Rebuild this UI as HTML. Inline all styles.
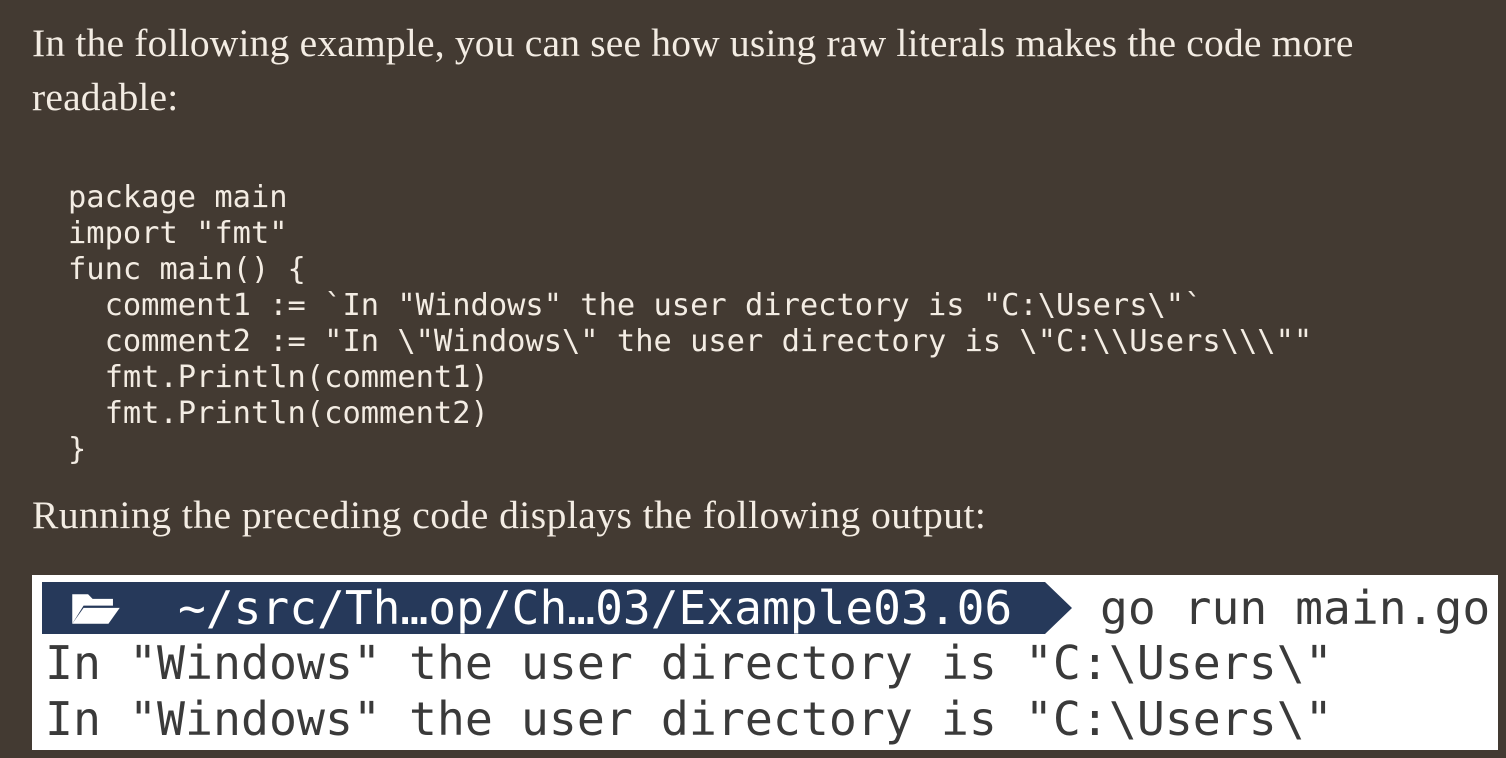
<!DOCTYPE html>
<html><head><style>
body{margin:0;width:1506px;height:758px;background:#433a32;overflow:hidden;position:relative;font-family:"Liberation Serif",serif;color:#f3ece3}
.p{position:absolute;left:32px;font-size:39.5px;letter-spacing:0.19px;line-height:54px;white-space:nowrap}
.code{position:absolute;left:68px;top:180px;font-family:"DejaVu Sans Mono",monospace;font-size:30.4px;line-height:36px;white-space:pre;color:#f3ece3}
.term{position:absolute;left:32px;top:575px;width:1466px;height:175px;background:#fff}
.bar{position:absolute;left:10px;top:7px;width:1003px;height:52px;background:#26395a}
.arrow{position:absolute;left:1013px;top:7px;width:0;height:0;border-top:26px solid transparent;border-bottom:26px solid transparent;border-left:27px solid #26395a}
.t{position:absolute;font-family:"DejaVu Sans Mono",monospace;font-size:46.5px;white-space:pre;color:#3a3a3a;line-height:56px}
</style></head><body>
<div class="p" style="top:16px">In the following example, you can see how using raw literals makes the code more</div>
<div class="p" style="top:70px">readable:</div>
<div class="code">package main
import "fmt"
func main() {
  comment1 := `In "Windows" the user directory is "C:\Users\"`
  comment2 := "In \"Windows\" the user directory is \"C:\\Users\\\""
  fmt.Println(comment1)
  fmt.Println(comment2)
}</div>
<div class="p" style="top:488px;letter-spacing:0.48px">Running the preceding code displays the following output:</div>
<div class="term">
<div class="bar"></div><div class="arrow"></div>
<svg style="position:absolute;left:38px;top:17px" width="52" height="34" viewBox="0 0 46 30"><path d="M2 2h14l4 4h18v6H12L2 28z" fill="#fff"/><path d="M12 14h32L34 28H2z" fill="#fff"/></svg>
<div class="t" style="left:146px;top:5px;color:#fff;font-size:46.2px">~/src/Th…op/Ch…03/Example03.06</div>
<div class="t" style="left:1068px;top:5px;font-size:46.3px">go run main.go</div>
<div class="t" style="left:13px;top:60px">In "Windows" the user directory is "C:\Users\"</div>
<div class="t" style="left:13px;top:116px">In "Windows" the user directory is "C:\Users\"</div>
</div>
</body></html>
